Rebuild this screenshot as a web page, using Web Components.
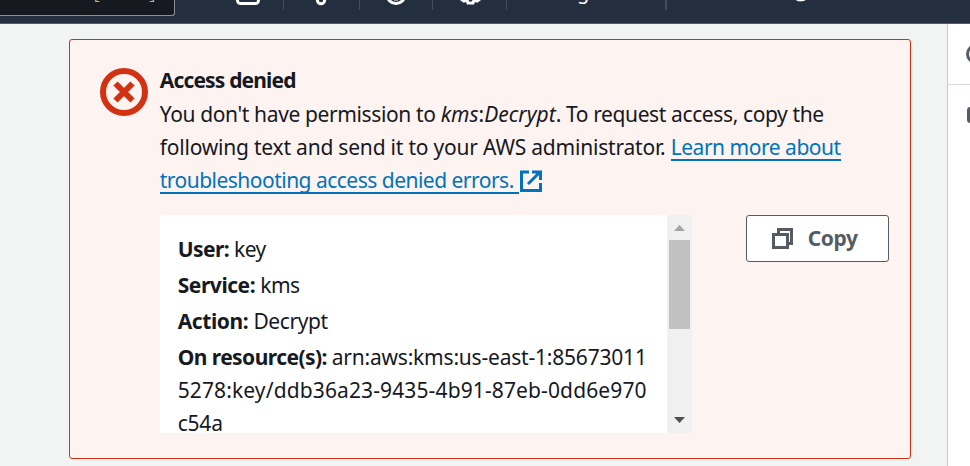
<!DOCTYPE html>
<html lang="en"><head><meta charset="utf-8"><title>Access denied</title>
<style>
html,body{margin:0;height:100%;overflow:hidden;background:#f2f3f3}
body{font:21px/33px "Noto Sans",sans-serif;color:#16191f}
</style></head><body>
<console-page></console-page>
<script>
const define=(name,html,setup)=>customElements.define(name,class extends HTMLElement{
  connectedCallback(){
    if(this.shadowRoot)return;
    const t=document.createElement('template');t.innerHTML=html;
    this.attachShadow({mode:'open'}).append(t.content.cloneNode(true));
    if(setup)setup(this);
  }
});

// A single line of text, tracked so that it fills the given width.
define('text-line',`<style>:host{display:block;white-space:nowrap;height:33px}
span{display:inline-block;margin:var(--drop,1px) 0 0 -.3px}</style><span><slot></slot></span>`,el=>{
  const s=el.shadowRoot.querySelector('span'),w=+el.getAttribute('width');
  const n=el.textContent.length,natural=s.getBoundingClientRect().width;
  s.style.letterSpacing=(w-natural)/n+'px';
  el.style.width=w+'px';
});

define('top-nav',`<style>
:host{display:flex;background:#232f3e;border-bottom:1px solid #545b64;box-sizing:border-box;height:24px;overflow:hidden}
.search{width:174px;height:15px;background:#16191f;border:1px solid #879196;border-width:0 1px 1px 0;border-radius:0 0 3px 0;overflow:hidden;margin-right:33px;box-sizing:content-box}
.search span{display:block;margin:-18px 0 0 92px;font:15.5px/26px "Liberation Mono",monospace;color:#aab7b8}
.cell{box-sizing:border-box;height:10px;border-right:1px solid #414d5c;overflow:hidden}
svg{display:block;fill:none;stroke:#fff;stroke-width:3}
.t{font:20px/24px "Noto Sans",sans-serif;color:#fff}
.t span{display:block;margin-top:-20px}
</style>
<div class="search"><span>[Alt+S]</span></div>
<div class="cell" style="width:76px"><svg width="75" height="10"><rect x="29.500" y="-17" width="21" height="20.500" rx="3"/></svg></div>
<div class="cell" style="width:76px"><svg width="75" height="10"><circle cx="37" cy="0" r="3.700"/></svg></div>
<div class="cell" style="width:73px"><svg width="72" height="10"><circle cx="36" cy="-5.500" r="9"/><path d="M34-.5h4" stroke-width="2"/></svg></div>
<div class="cell" style="width:74px"><svg width="73" height="10"><path d="M28-1l3 2 3-1 1 3h5l1-3 3 1 3-2"/></svg></div>
<div class="cell t" style="width:160px;border-right-width:2px"><span style="margin-left:70px">g</span></div>
<div class="cell t" style="border:0"><span style="margin:-19px 0 0 125px">@</span></div>`);

define('status-error-icon',`<style>:host{display:block;width:48px;height:48px}svg{display:block}</style>
<svg width="48" height="48" fill="none" stroke="#d13212" stroke-width="6"><circle cx="24" cy="24" r="21"/><path d="M15.500 15.500l17 17m0-17l-17 17"/></svg>`);

define('external-icon',`<style>:host{display:block;width:22px;height:22px}svg{display:block}</style>
<svg width="22" height="22" fill="none" stroke="#0073bb" stroke-width="3"><path d="M9 2H1.500v18.500h19V13M12 2h8.500v8M20 2L8 14"/></svg>`);

define('text-link',`<style>:host{display:inline-block;height:29px;border-bottom:2px solid #0073bb;color:#0073bb;vertical-align:top;box-sizing:content-box}</style><slot></slot>`);

define('copy-button',`<style>
:host{display:flex;align-items:center;box-sizing:border-box;width:143px;height:47px;border:1px solid #545b64;border-radius:3px;background:#fff;color:#545b64;padding-left:25px;gap:14px;font-weight:700;--drop:0px}
svg{display:block}text-line{height:33px}</style>
<svg width="22" height="22" fill="none" stroke="#545b64" stroke-width="3"><path d="M6.500 5.500v-4h13v14h-4"/><path d="M1.500 6.500h14v13h-14z"/></svg>
<text-line width="50">Copy</text-line>`);

define('scroll-bar',`<style>
:host{display:flex;flex-direction:column;align-items:center;width:25px;background:#f0f0f0}
svg{display:block}.thumb{width:21px;height:89px;background:#c1c1c1}.space{flex:1}</style>
<svg width="25" height="25"><path d="M7 16L12.500 10 18 16z" fill="#a3a3a3"/></svg><div class="thumb"></div><div class="space"></div>
<svg width="25" height="25"><path d="M7 9L12.500 15 18 9z" fill="#505050"/></svg>`);

define('detail-box',`<style>
:host{display:flex;width:532px;height:218px;background:#fff;overflow:hidden}
.body{flex:1;min-width:0;padding:17px 0 0 18px;box-sizing:border-box;height:218px;overflow:hidden}
text-line{margin-bottom:3px}.tight{margin-bottom:0}.row{display:flex}</style>
<div class="body">
<text-line width="88"><b>User:</b> key</text-line>
<text-line width="122"><b>Service:</b> kms</text-line>
<text-line width="150"><b>Action:</b> Decrypt</text-line>
<div class="row"><text-line class="tight" width="154"><b>On resource(s):&nbsp;</b></text-line><text-line class="tight" width="315">arn:aws:kms:us-east-1:85673011</text-line></div>
<text-line class="tight" width="469">5278:key/ddb36a23-9435-4b91-87eb-0dd6e970</text-line>
<text-line class="tight" width="45">c54a</text-line>
</div><scroll-bar></scroll-bar>`);

define('flash-message',`<style>
:host{display:flex;box-sizing:border-box;width:842px;height:420px;margin:15px 0 0 69px;border:1px solid #d13212;border-radius:3px;background:#fdf3f1;padding:24px 0 0 30px;gap:12px}
status-error-icon{margin-top:4px}.row{display:flex;height:33px}.details{display:flex;margin-top:19px;gap:54px}
external-icon{margin:7px 0 0 1px}.title{--drop:0px}
.content{width:740px}</style>
<status-error-icon></status-error-icon>
<div class="content">
<text-line class="title" width="136"><b>Access denied</b></text-line>
<div class="row"><text-line width="281">You don't have permission to&nbsp;</text-line><text-line width="115"><i>kms</i>:<i>Decrypt</i></text-line><text-line width="268">. To request access, copy the</text-line></div>
<div class="row"><text-line width="511">following text and send it to your AWS administrator.&nbsp;</text-line><text-link><text-line width="170">Learn more about</text-line></text-link></div>
<div class="row"><text-link><text-line width="359">troubleshooting access denied errors.&nbsp;</text-line></text-link><external-icon></external-icon></div>
<div class="details"><detail-box></detail-box><copy-button></copy-button></div>
</div>`);

define('side-panel',`<style>
:host{display:block;box-sizing:border-box;width:23px;height:442px;background:#fff;border-left:1px solid #c6cbcb;overflow:hidden}
.head{height:60px;border-bottom:1px solid #d5dbdb}svg{display:block}</style>
<div class="head"><svg width="22" height="60"><circle cx="28" cy="30" r="8.500" fill="none" stroke="#545b64" stroke-width="3"/></svg></div>
<svg width="22" height="60"><rect x="20.500" y="23.500" width="18" height="13" rx="2" fill="none" stroke="#545b64" stroke-width="3"/></svg>`);

define('console-page',`<style>:host{display:block;width:970px;height:466px;overflow:hidden}.main{display:flex;justify-content:space-between}</style>
<top-nav></top-nav><div class="main"><flash-message></flash-message><side-panel></side-panel></div>`);
</script></body></html>
